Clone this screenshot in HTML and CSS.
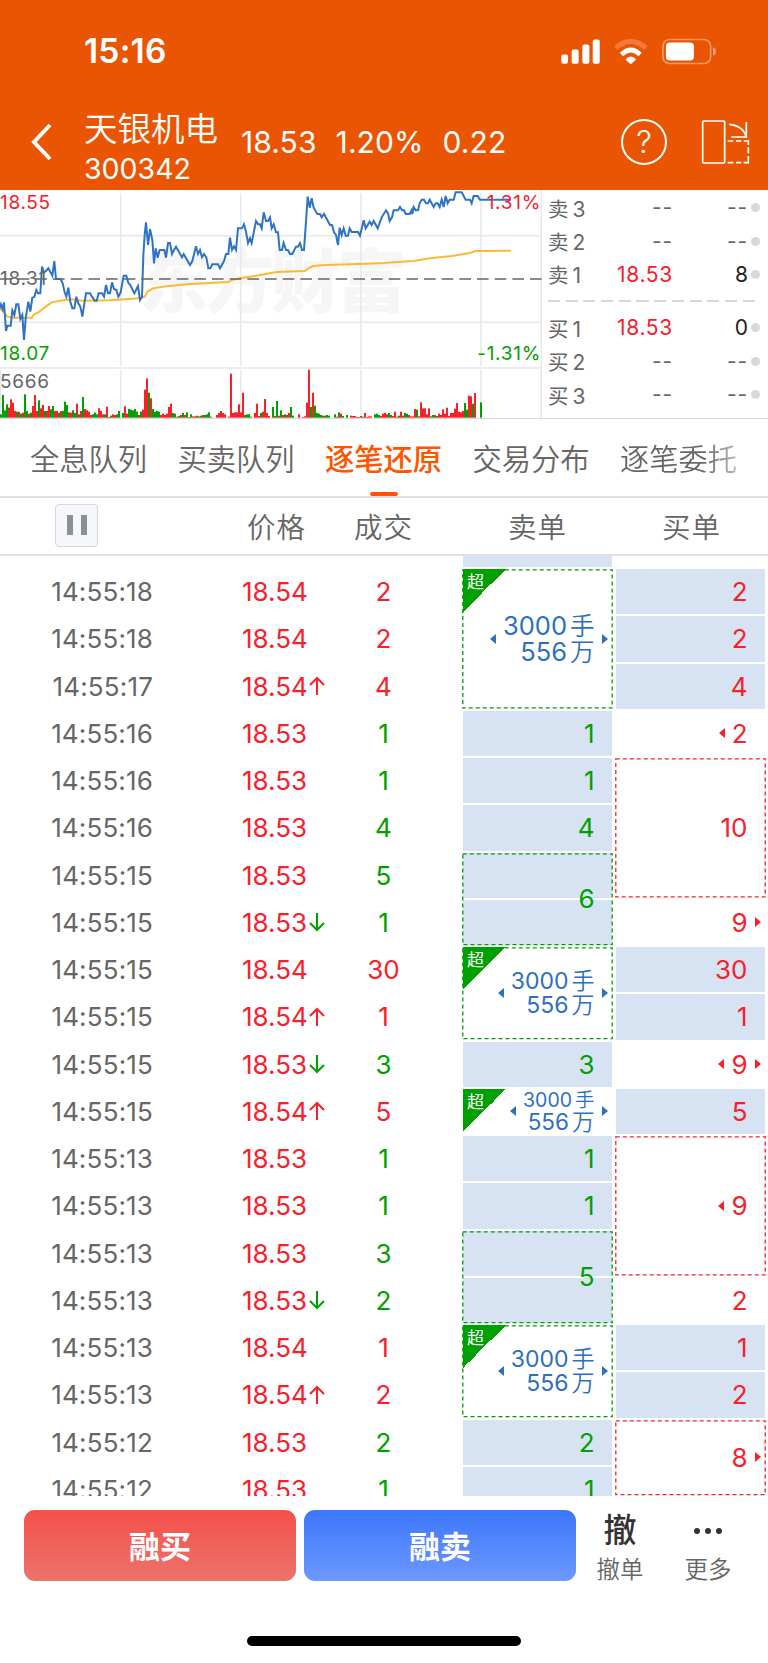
FILE: index.html
```html
<!DOCTYPE html>
<html lang="zh-CN">

<head>
    <meta charset="UTF-8">
    <title>天银机电 300342</title>
    <link rel="stylesheet" href="styles.css">
</head>

<body>

<header class="header">
    <div class="status-bar">
        <span class="clock">15:16</span>
        <svg class="status-icons" viewBox="40 20 470 86">
            <g fill="#fff">
                <rect x="41" y="72" width="20" height="28" rx="6"/>
                <rect x="72" y="57" width="21" height="43" rx="6"/>
                <rect x="104" y="42" width="21" height="58" rx="6"/>
                <rect x="135" y="27" width="21" height="73" rx="6"/>
            </g>
            <path d="M204 53 Q249 13 294 53" fill="none" stroke="#fff" stroke-opacity=".22" stroke-width="15"/>
            <path d="M221 72 Q249 45 277 72" fill="none" stroke="#fff" stroke-width="14"/>
            <path d="M233 87 Q249 69 265 87 L251 100 Q249 101 247 100 Z" fill="#fff"/>
            <rect x="345" y="27" width="143" height="72" rx="20" fill="none" stroke="#fff" stroke-opacity=".4" stroke-width="5"/>
            <rect x="354" y="36" width="84" height="54" rx="12" fill="#fff"/>
            <path d="M495 50 Q504 54 504 63 Q504 72 495 76 Z" fill="#fff" fill-opacity=".45"/>
        </svg>
    </div>
    <div class="nav">
        <svg class="back" viewBox="0 0 24 40">
            <path d="M20 3 L4 20 L20 37" fill="none" stroke="#fff" stroke-width="4"/>
        </svg>
        <div class="stock">
            <div class="stock-name">天银机电</div>
            <div class="stock-code">300342</div>
        </div>
        <div class="quote">
            <span>18.53</span>
            <span>1.20%</span>
            <span>0.22</span>
        </div>
        <div class="help">?</div>
        <svg class="rotate" viewBox="460 265 150 138" fill="none" stroke="#fff" stroke-width="5">
            <rect x="465" y="271" width="66" height="126" rx="3"/>
            <path d="M545 281 Q586 285 596 318 M596 274 V319 H551"/>
            <path d="M540 331 H557 M565 331 H581 M588 331 H602 V343 M602 350 V368 M602 376 V396 H588 M581 396 H565 M557 396 H540"/>
        </svg>
    </div>
</header>

<section class="market">
    <div class="chart">
        <svg id="chartSvg" viewBox="0 15 1626 687">
            <text class="watermark" x="418" y="365" textLength="800">东方财富</text>
            <g class="grid">
                <path d="M362 24 V543 M722 24 V543 M1083 24 V543 M1443 24 V543"/>
                <path d="M362 555 V698 M722 555 V698 M1083 555 V698 M1443 555 V698"/>
                <path d="M0 152 H1624 M0 412 H1624 M0 549 H1624 M1624 15 V698 M1 549 V698"/>
            </g>
            <g id="volume"></g>
            <polyline class="line-avg" points="0,370 12,382 22,395 40,398 95,398 103,388 118,380 130,370 155,352 180,347 215,343 245,347 330,346 420,340 434,335 442,320 460,310 500,304 570,297 685,291 695,285 720,280 780,270 830,261 915,258 925,250 940,243 975,240 1080,237 1150,234 1240,228 1290,220 1355,213 1410,204 1425,198 1533,197"/>
            <path class="line-base" d="M0 282 H1626"/>
            <polyline class="line-price" points="0,370 3,358 8,372 12,352 18,438 22,422 32,422 37,376 43,390 49,358 55,358 61,402 67,390 72,465 77,400 85,350 91,380 97,338 103,336 109,315 114,325 121,325 126,245 132,262 138,258 145,250 157,272 163,228 168,282 182,282 188,295 194,322 199,335 205,308 211,350 217,370 223,370 229,335 235,355 241,365 247,395 258,325 270,325 276,335 284,347 290,347 296,325 306,325 312,335 318,300 324,325 330,325 336,292 342,312 349,315 355,335 362,322 371,272 379,272 385,294 391,300 403,325 414,303 420,345 426,335 430,210 434,150 438,112 444,180 450,132 457,165 462,235 467,190 473,218 479,195 493,195 498,218 504,174 510,174 516,207 522,195 528,185 546,217 551,207 570,240 577,228 588,184 594,207 600,195 606,217 612,207 619,217 625,250 631,250 637,238 654,238 660,250 672,228 678,207 685,207 690,158 696,195 702,184 708,195 714,130 726,130 732,118 738,140 744,174 750,160 755,174 768,108 774,118 780,118 785,130 791,82 798,108 804,108 810,97 815,130 821,118 828,142 834,142 839,195 846,195 851,174 858,195 864,195 870,207 877,207 888,185 894,185 900,174 906,195 912,195 918,110 923,35 929,68 935,40 941,68 952,87 960,87 965,97 972,87 990,120 996,120 1002,142 1008,150 1014,180 1019,128 1025,150 1031,130 1037,152 1044,152 1049,130 1055,141 1074,141 1080,152 1091,106 1097,130 1109,110 1115,120 1121,108 1133,130 1145,97 1158,76 1164,85 1169,108 1176,97 1181,76 1194,76 1200,66 1206,76 1212,76 1217,87 1229,87 1235,76 1237,87 1241,66 1247,76 1254,76 1259,55 1265,44 1272,44 1278,55 1284,55 1289,44 1301,66 1307,55 1313,55 1319,66 1325,44 1331,66 1337,33 1343,55 1349,44 1361,44 1367,22 1385,22 1397,44 1410,44 1415,55 1421,33 1433,33 1440,44 1533,44"/>
        </svg>
        <span class="axis axis-high">18.55</span>
        <span class="axis axis-mid">18.31</span>
        <span class="axis axis-low">18.07</span>
        <span class="axis axis-up">1.31%</span>
        <span class="axis axis-down">-1.31%</span>
        <span class="axis axis-vol">5666</span>
    </div>
    <div class="book">
        <div class="book-row"><span class="side">卖<i>3</i></span><span class="price none">--</span><span class="qty none">--</span><b class="dot"></b></div>
        <div class="book-row"><span class="side">卖<i>2</i></span><span class="price none">--</span><span class="qty none">--</span><b class="dot"></b></div>
        <div class="book-row"><span class="side">卖<i>1</i></span><span class="price">18.53</span><span class="qty">8</span><b class="dot"></b></div>
        <div class="book-divider"></div>
        <div class="book-row"><span class="side">买<i>1</i></span><span class="price">18.53</span><span class="qty">0</span><b class="dot"></b></div>
        <div class="book-row"><span class="side">买<i>2</i></span><span class="price none">--</span><span class="qty none">--</span><b class="dot"></b></div>
        <div class="book-row"><span class="side">买<i>3</i></span><span class="price none">--</span><span class="qty none">--</span><b class="dot"></b></div>
    </div>
</section>

<nav class="tabs">
    <a class="tab">全息队列</a>
    <a class="tab">买卖队列</a>
    <a class="tab active">逐笔还原</a>
    <a class="tab">交易分布</a>
    <a class="tab last">逐笔委托</a>
</nav>

<div class="columns">
    <div class="col-pause"><button class="pause"><i></i><i></i></button></div>
    <div class="col-price">价格</div>
    <div class="col-vol">成交</div>
    <div class="col-order">卖单</div>
    <div class="col-order">买单</div>
</div>

<main class="list">
    <div class="trades" id="trades"></div>
    <div class="orders sell" id="sell"><div class="peek filled"></div></div>
    <div class="orders buy" id="buy"><div class="peek"></div></div>
</main>

<footer class="footer">
    <div class="actions">
        <button class="btn btn-buy">融买</button>
        <button class="btn btn-sell">融卖</button>
        <div class="action">
            <span class="action-icon">撤</span>
            <span class="action-label">撤单</span>
        </div>
        <div class="action">
            <span class="action-icon"><svg viewBox="0 0 30 8" width="30" height="8" fill="#333"><circle cx="4" cy="4" r="3"/><circle cx="15" cy="4" r="3"/><circle cx="26" cy="4" r="3"/></svg></span>
            <span class="action-label">更多</span>
        </div>
    </div>
    <div class="home-bar"></div>
</footer>

<script src="script.js"></script>
</body>

</html>
```
FILE: styles.css
```css
* {
    box-sizing: border-box;
}

body {
    margin: 0;
    width: 768px;
    height: 1663px;
    overflow: hidden;
    background-color: #fff;
    color: #666;
    font-family: Inter, "Noto Sans CJK SC", sans-serif;
}

i {
    font-style: normal;
}

button {
    font-family: inherit;
    padding: 0;
}

/* HEADER */
.header {
    height: 190px;
    background-color: #ea5504;
    color: #fff;
}

.status-bar {
    height: 102px;
    display: flex;
    align-items: center;
    justify-content: space-between;
    padding: 0 50px 0 84px;
}

.clock {
    font-size: 33.5px;
    font-weight: 600;
    letter-spacing: 0.2px;
}

.status-icons {
    width: 157px;
    height: 29px;
}

.nav {
    display: flex;
    align-items: center;
    height: 80px;
    padding-left: 30px;
}

.back {
    width: 24px;
    height: 40px;
}

.stock {
    width: 157px;
    margin-left: 30px;
    padding-top: 12px;
}

.stock-name {
    font-size: 33.5px;
    line-height: 41px;
    font-weight: 350;
    white-space: nowrap;
}

.stock-code {
    font-size: 28.5px;
    line-height: 37px;
}

.quote {
    display: flex;
    gap: 19px;
    width: 380px;
    font-size: 30px;
    letter-spacing: 0.1px;
}

.help {
    width: 46px;
    height: 46px;
    border: 2px solid #fff;
    border-radius: 50%;
    text-align: center;
    font-size: 31px;
    font-weight: 300;
    line-height: 42px;
}

.rotate {
    width: 50px;
    height: 46px;
    margin-left: 34px;
}

/* CHART */
.market {
    display: flex;
    height: 229px;
    border-bottom: 1px solid #d8d8de;
}

.chart {
    position: relative;
    width: 542px;
    height: 229px;
}

.chart svg {
    display: block;
    width: 542px;
    height: 229px;
}

.watermark {
    font-family: "Noto Sans CJK SC", sans-serif;
    font-size: 208px;
    font-weight: 900;
    fill: #f6f6f6;
}

.grid path {
    fill: none;
    stroke: #e5e8ef;
    stroke-width: 4.5;
}

.line-avg,
.line-price,
.line-base {
    fill: none;
    stroke-width: 6;
}

.line-avg {
    stroke: #fdb933;
}

.line-price {
    stroke: #2f74c4;
}

.line-base {
    stroke: #666;
    stroke-width: 4;
    stroke-dasharray: 35 18;
}

.axis {
    position: absolute;
    font-size: 19px;
    line-height: 22px;
    letter-spacing: 0.7px;
}

.axis-high {
    top: 2px;
    left: 0;
    color: #f8202a;
}

.axis-mid {
    top: 78px;
    left: 0;
}

.axis-low {
    top: 153px;
    left: 0;
    color: #00a000;
}

.axis-up {
    top: 2px;
    right: 1px;
    color: #f8202a;
}

.axis-down {
    top: 153px;
    right: 1px;
    color: #00a000;
}

.axis-vol {
    top: 181px;
    left: 0;
}

/* ORDER BOOK */
.book {
    width: 226px;
    padding: 1px 8px 0 6px;
}

.book-row {
    display: flex;
    align-items: center;
    height: 33.4px;
    font-size: 21px;
}

.side {
    width: 42px;
    font-size: 20.5px;
}

.side i {
    margin-left: 4px;
    font-size: 21px;
}

.price {
    width: 83px;
    text-align: right;
    color: #f8202a;
    letter-spacing: 0.7px;
}

.qty {
    width: 75px;
    text-align: right;
    color: #222;
}

.none {
    color: #666;
    letter-spacing: 0.8px;
}

.dot {
    width: 9px;
    height: 9px;
    margin-left: 3px;
    border-radius: 50%;
    background-color: #d5d8df;
}

.book-divider {
    height: 20px;
    width: 208px;
    background: repeating-linear-gradient(90deg, #d5d8df 0 12px, transparent 12px 17.7px) 0 9px / 100% 2px no-repeat;
}

/* TABS */
.tabs {
    display: flex;
    gap: 29.5px;
    height: 79px;
    padding-left: 29.5px;
    border-bottom: 2px solid #e0e0e7;
}

.tab {
    display: flex;
    flex: none;
    align-items: center;
    justify-content: center;
    position: relative;
    width: 118px;
    padding-bottom: 5px;
    margin-top: 4px;
    font-size: 29.3px;
    font-weight: 350;
}

.tab.active {
    color: #ff5500;
    font-weight: 500;
}

.tab.active::after {
    content: "";
    position: absolute;
    bottom: 0;
    left: 45px;
    width: 28px;
    height: 4px;
    border-radius: 2px;
    background-color: #ff5500;
}

.tab.last {
    color: transparent;
    background: linear-gradient(90deg, #666 70%, #ccc 105%);
    background-clip: text;
}

/* COLUMN TITLES */
.columns {
    display: flex;
    align-items: center;
    height: 58px;
    padding-bottom: 2px;
    border-bottom: 2px solid #e0e0e7;
    font-size: 28.5px;
    font-weight: 350;
    letter-spacing: 1px;
}

.col-pause {
    width: 223px;
    padding-left: 55px;
}

.pause {
    display: flex;
    align-items: center;
    justify-content: center;
    gap: 8px;
    width: 43px;
    height: 43px;
    border: 1px solid #d5d8df;
    border-radius: 4px;
    background-color: #f5f7fb;
}

.pause i {
    width: 6px;
    height: 20px;
    background-color: #8e8e96;
}

.col-price {
    width: 107px;
    text-align: center;
}

.col-vol {
    width: 107px;
    text-align: center;
}

.col-order {
    width: 153px;
    padding-left: 71px;
}

.col-order + .col-order {
    padding-left: 72px;
    width: 170px;
}

/* TRADE LIST */
.list {
    display: flex;
    height: 940px;
    overflow: hidden;
    font-size: 26px;
}

.trades {
    width: 462px;
    padding-top: 12px;
}

.trade {
    display: flex;
    align-items: center;
    height: 47.25px;
}

.trade .time {
    width: 153px;
    text-align: right;
    letter-spacing: 0.15px;
}

.trade .deal {
    display: flex;
    align-items: center;
    width: 177px;
    padding-left: 89px;
}

.trade .arrow {
    width: 16px;
    height: 20px;
    margin-left: 1.5px;
    fill: none;
    stroke: currentColor;
    stroke-width: 2;
}

.trade .vol {
    width: 107px;
    text-align: center;
}

.red {
    color: #f8202a;
}

.green {
    color: #00a000;
}

.orders {
    width: 151px;
    flex: none;
}

.orders.buy {
    margin-left: 2px;
}

.peek {
    height: 12px;
    margin: 0 1px;
}

.peek.filled {
    background-color: #d7e3f3;
    border-bottom: 1px solid #fff;
}

.order {
    position: relative;
    display: flex;
    align-items: center;
    justify-content: flex-end;
    padding-right: 18.5px;
}

.order .cells {
    position: absolute;
    inset: 0 1px 0 1px;
}

.order .cells div {
    height: 47.25px;
    padding: 1px 0;
    background: #d7e3f3 content-box;
}

.order .frame {
    position: absolute;
    left: 0;
    top: 0;
    width: 100%;
    height: 100%;
}

.frame rect {
    fill: none;
    stroke: currentColor;
    stroke-width: 1.3;
    stroke-dasharray: 4 3;
}

.order .value {
    position: relative;
    text-align: right;
}

.prev,
.next {
    position: absolute;
    top: 50%;
    margin-top: -5px;
    border: 5px solid transparent;
}

.prev {
    right: 100%;
    margin-right: 7px;
    border-left-width: 0;
    border-right: 6px solid currentColor;
}

.next {
    left: 100%;
    margin-left: 7.5px;
    border-right-width: 0;
    border-left: 6px solid currentColor;
}

.super .value {
    color: #2d6fc1;
    font-size: 25.5px;
    line-height: 26px;
}

.super .value i {
    margin-left: 3px;
    font-size: 24.5px;
    font-weight: 350;
}

.super.span-2 .value {
    font-size: 23px;
    line-height: 24px;
}

.super.span-2 .value i {
    font-size: 23px;
}

.super.span-1 .value {
    font-size: 22.5px;
    line-height: 22px;
}

.super.span-1 .value div:first-child {
    font-size: 19.5px;
}

.super.span-1 .value i {
    font-size: 22.5px;
}

.super.span-1 .value div:first-child i {
    font-size: 19.5px;
}

.tag {
    position: absolute;
    top: 1px;
    left: 1px;
    width: 43px;
    height: 43px;
    padding: 3px 0 0 4px;
    background: linear-gradient(135deg, #00a000 50%, transparent 50%);
    color: #fff;
    font-size: 17px;
    line-height: 20px;
}

/* FOOTER */
.footer {
    height: 167px;
    padding: 14px 0 0 24px;
}

.actions {
    display: flex;
    height: 71px;
}

.btn {
    width: 272px;
    height: 71px;
    margin-right: 8px;
    padding-bottom: 3px;
    border: none;
    border-radius: 11px;
    color: #fff;
    font-size: 31px;
    font-weight: 700;
}

.btn-buy {
    background: linear-gradient(#f4504a, #ec736c);
}

.btn-sell {
    background: linear-gradient(#3c76fa, #6d99ff);
}

.action {
    display: flex;
    flex-direction: column;
    align-items: center;
    width: 88px;
}

.btn + .action {
    margin-left: -8px;
}

.action-icon {
    display: flex;
    flex: none;
    align-items: center;
    height: 41px;
    line-height: 39px;
    color: #333;
    font-size: 33px;
    font-weight: 500;
}

.action-label {
    font-size: 23.5px;
    font-weight: 350;
    line-height: 38px;
}

.home-bar {
    width: 274px;
    height: 10px;
    margin: 55px 0 0 223px;
    border-radius: 5px;
    background-color: #000;
}
```
FILE: script.js
```js
// time, price, direction, volume, colour
const trades = [
    ['14:55:18', '18.54', '', 2, 'red'],
    ['14:55:18', '18.54', '', 2, 'red'],
    ['14:55:17', '18.54', 'up', 4, 'red'],
    ['14:55:16', '18.53', '', 1, 'green'],
    ['14:55:16', '18.53', '', 1, 'green'],
    ['14:55:16', '18.53', '', 4, 'green'],
    ['14:55:15', '18.53', '', 5, 'green'],
    ['14:55:15', '18.53', 'down', 1, 'green'],
    ['14:55:15', '18.54', '', 30, 'red'],
    ['14:55:15', '18.54', 'up', 1, 'red'],
    ['14:55:15', '18.53', 'down', 3, 'green'],
    ['14:55:15', '18.54', 'up', 5, 'red'],
    ['14:55:13', '18.53', '', 1, 'green'],
    ['14:55:13', '18.53', '', 1, 'green'],
    ['14:55:13', '18.53', '', 3, 'green'],
    ['14:55:13', '18.53', 'down', 2, 'green'],
    ['14:55:13', '18.54', '', 1, 'red'],
    ['14:55:13', '18.54', 'up', 2, 'red'],
    ['14:55:12', '18.53', '', 2, 'green'],
    ['14:55:12', '18.53', '', 1, 'green']
];

const sellOrders = [
    { span: 3, big: true, frame: true },
    { span: 1, v: 1, fill: true },
    { span: 1, v: 1, fill: true },
    { span: 1, v: 4, fill: true },
    { span: 2, v: 6, fill: true, frame: true },
    { span: 2, big: true, frame: true },
    { span: 1, v: 3, fill: true },
    { span: 1, big: true },
    { span: 1, v: 1, fill: true },
    { span: 1, v: 1, fill: true },
    { span: 2, v: 5, fill: true, frame: true },
    { span: 2, big: true, frame: true },
    { span: 1, v: 2, fill: true },
    { span: 1, v: 1, fill: true }
];

const buyOrders = [
    { span: 1, v: 2, fill: true },
    { span: 1, v: 2, fill: true },
    { span: 1, v: 4, fill: true },
    { span: 1, v: 2, prev: true },
    { span: 3, v: 10, frame: true },
    { span: 1, v: 9, next: true },
    { span: 1, v: 30, fill: true },
    { span: 1, v: 1, fill: true },
    { span: 1, v: 9, prev: true, next: true },
    { span: 1, v: 5, fill: true },
    { span: 3, v: 9, prev: true, frame: true },
    { span: 1, v: 2 },
    { span: 1, v: 1, fill: true },
    { span: 1, v: 2, fill: true },
    { span: 1.64, v: 8, next: true, frame: true }
];

const ROW = 47.25;
const arrows = {
    up: '<svg class="arrow red" viewBox="0 0 16 20"><path d="M8 19 V2 M1 9 L8 2 L15 9"/></svg>',
    down: '<svg class="arrow green" viewBox="0 0 16 20"><path d="M8 1 V18 M1 11 L8 18 L15 11"/></svg>'
};

document.getElementById('trades').innerHTML = trades.map(([time, price, dir, vol, color]) => `
    <div class="trade">
        <span class="time">${time}</span>
        <span class="deal red">${price}${arrows[dir] || ''}</span>
        <span class="vol ${color}">${vol}</span>
    </div>`).join('');

function renderOrders(id, orders, color) {
    const html = orders.map(o => {
        const h = o.span * ROW;
        let s = `<div class="order ${color}${o.big ? ' super span-' + o.span : ''}" style="height:${h}px">`;
        if (o.fill) s += `<div class="cells">${'<div></div>'.repeat(o.span)}</div>`;
        if (o.frame) s += `<svg class="frame"><rect x="0.8" y="1.8" width="149.4" height="${h - 3.6}"/></svg>`;
        if (o.big) s += '<span class="tag">超</span>';
        s += '<div class="value">';
        s += o.big ? '<div>3000<i>手</i></div><div>556<i>万</i></div>' : o.v;
        if (o.prev || o.big) s += '<b class="prev"></b>';
        if (o.next || o.big) s += '<b class="next"></b>';
        return s + '</div></div>';
    }).join('');
    document.getElementById(id).insertAdjacentHTML('beforeend', html);
}

renderOrders('sell', sellOrders, 'green');
renderOrders('buy', buyOrders, 'red');

// volume bars, one per minute: g = falling, r = rising
const volume = `g10 g68 g22 g40 r30 r55 r45 r20 g18 r18 g12 r15 g70 g20 r12 g15 r35 r68 r20 g52
r28 r38 g20 r20 r35 g25 g35 r20 r20 g15 r20 g20 g48 g38 r16 r15 g22 g14 r42 g10
r20 g62 r26 r22 r18 r8 g10 g15 g10 r28 r20 r10 g10 r33 r2 g6 r10 r8 g10 g20
0 g14 r34 r12 g26 g24 g22 g26 g18 r8 g18 r24 r84 r118 g75 r58 g26 g18 g20 g18
r8 r12 r8 r12 r32 r42 g14 g12 r3 g5 r8 g14 r8 g16 r2 g10 r4 r4 g6 r4
g6 r8 g8 g10 g16 r3 0 0 r8 r14 r20 r14 r10 0 r3 r132 r14 r16 r16 r40
r16 r75 g8 g10 g10 r3 0 r14 r42 r5 g14 r18 r56 r14 r5 0 g32 r5 g50 r6
g22 r8 g10 r8 r14 g32 g6 0 0 r10 0 r2 r4 r45 r144 g32 r75 g36 g14 g12
g8 r6 g6 g8 g6 0 0 g10 r3 g16 r12 g5 0 g8 0 r6 r5 r5 r2 g2
r5 g3 r14 r2 r4 r4 0 g10 g12 g8 r5 r12 r14 r10 g14 g8 r5 r18 r3 g6
r18 r6 g14 g12 r8 r4 r4 r26 g24 r4 r46 r28 r28 r10 r28 g4 g8 r8 g5 r12
r8 r25 r12 r30 r5 r14 r14 r27 r44 r18 r16 r20 g44 g24 r66 r64 g42 r74 0 0
g46`.split(/\s+/);

document.getElementById('volume').innerHTML = volume.map((bar, k) => {
    const h = Number(bar.slice(1));
    const fill = bar[0] === 'g' ? '#00a000' : '#f8202a';
    return h ? `<rect x="${k * 6}" y="${698 - h}" width="6" height="${h}" fill="${fill}"/>` : '';
}).join('');
```
